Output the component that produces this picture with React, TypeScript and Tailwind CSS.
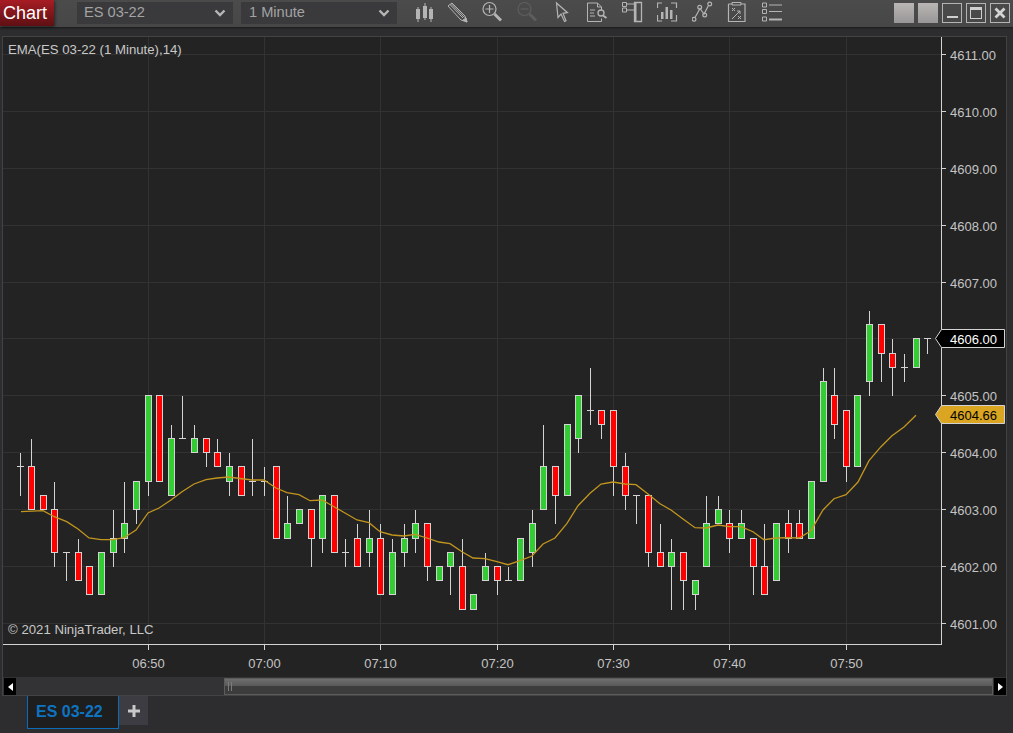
import React from "react";

type Bar = [number, number, number, number, "g" | "r" | "d"];

const bars: Bar[] = [
  [4, 3.75, 3.75, 3.25, "d"], [4.25, 3.75, 3, 3, "r"], [3.25, 3.25, 3, 3, "r"], [3.5, 3, 2.25, 2, "r"],
  [2.25, 2.25, 2.25, 1.75, "d"], [2.5, 2.25, 1.75, 1.75, "r"], [2, 2, 1.5, 1.5, "r"], [2.25, 2.25, 1.5, 1.5, "g"],
  [3, 2.5, 2.25, 2, "g"], [3.5, 2.75, 2.5, 2.25, "g"], [3.5, 3.5, 3, 2.75, "g"], [5, 5, 3.5, 3.25, "g"],
  [5, 5, 3.5, 3.5, "r"], [4.5, 4.25, 3.25, 3.25, "g"], [5, 4.25, 4.25, 4.25, "d"], [4.5, 4.25, 4, 4, "g"],
  [4.25, 4.25, 4, 3.75, "r"], [4.25, 4, 3.75, 3.75, "r"], [4, 3.75, 3.5, 3.25, "g"], [3.75, 3.75, 3.25, 3.25, "r"],
  [4.25, 3.5, 3.5, 3.25, "d"], [3.75, 3.5, 3.5, 3.25, "d"], [3.75, 3.75, 2.5, 2.5, "r"], [3.25, 2.75, 2.5, 2.5, "g"],
  [3, 3, 2.75, 2.75, "g"], [3, 3, 2.5, 2, "r"], [3.25, 3.25, 2.5, 2.25, "g"], [3.25, 3.25, 2.25, 2.25, "r"],
  [2.5, 2.25, 2.25, 2, "d"], [2.75, 2.5, 2, 2, "r"], [3, 2.5, 2.25, 2, "g"], [2.75, 2.5, 1.5, 1.5, "r"],
  [2.5, 2.25, 1.5, 1.5, "g"], [2.75, 2.5, 2.25, 2, "g"], [3, 2.75, 2.5, 2.25, "g"], [2.75, 2.75, 2, 1.75, "r"],
  [2, 2, 1.75, 1.75, "g"], [2.25, 2.25, 2, 1.5, "g"], [2.5, 2, 1.25, 1.25, "r"], [1.5, 1.5, 1.25, 1.25, "g"],
  [2.25, 2, 1.75, 1.75, "g"], [2, 2, 1.75, 1.5, "r"], [2, 1.75, 1.75, 1.75, "d"], [2.5, 2.5, 1.75, 1.75, "g"],
  [3, 2.75, 2.25, 2, "g"], [4.5, 3.75, 3, 3, "g"], [3.75, 3.75, 3.25, 2.75, "r"], [4.5, 4.5, 3.25, 3.25, "g"],
  [5, 5, 4.25, 4, "g"], [5.5, 4.75, 4.75, 4.5, "d"], [4.75, 4.75, 4.5, 4.25, "r"], [4.75, 4.75, 3.75, 3.25, "r"],
  [4, 3.75, 3.25, 3, "r"], [3.25, 3.25, 3.25, 2.75, "d"], [3.25, 3.25, 2.25, 2, "r"], [2.75, 2.25, 2, 2, "r"],
  [2.5, 2.25, 2, 1.25, "g"], [2.25, 2.25, 1.75, 1.25, "r"], [1.75, 1.75, 1.5, 1.25, "g"], [3.25, 2.75, 2, 2, "g"],
  [3.25, 3, 2.75, 2.75, "g"], [3, 2.75, 2.5, 2.25, "r"], [3, 2.75, 2.5, 2.5, "g"], [2.5, 2.5, 2, 1.5, "r"],
  [2.75, 2, 1.5, 1.5, "r"], [2.75, 2.75, 1.75, 1.75, "g"], [3, 2.75, 2.5, 2.25, "r"], [3, 2.75, 2.5, 2.5, "r"],
  [3.5, 3.5, 2.5, 2.5, "g"], [5.5, 5.25, 3.5, 3.5, "g"], [5.5, 5, 4.5, 4.25, "r"], [4.75, 4.75, 3.75, 3.5, "r"],
  [5, 5, 3.75, 3.75, "g"], [6.5, 6.25, 5.25, 5, "g"], [6.25, 6.25, 5.75, 5.25, "r"], [6, 5.75, 5.5, 5, "r"],
  [5.75, 5.5, 5.5, 5.25, "d"], [6, 6, 5.5, 5.5, "g"], [6, 6, 6, 5.75, "d"],
];

const ema =
  "21,511.7 43,510.7 54.3,516.7 66.7,521.7 78,529 89,538 101,539.7 113,539.7 124,537.7 136,530 148,513 159,508 171,500 182,491.7 194,484 206,479.7 217,478 229,477 240,478.5 252,480 264,480 276,488 287,492.7 299,494.7 310,500.7 322,500 334,506.7 345,513 357,520 369,522.7 380,531.7 392,535 404,536 415,534.3 427,538 439,542 450,543.7 462,551.7 473,558 485,558.7 497,561.7 508,564.7 520,560.7 532,556 543,544 555,538 567,523.3 578,505.7 590,493.3 601,484 613,482 625,484 636,484.7 648,494 660,503.7 671,510 683,519 695,527.7 706,528 718,525 729,526.7 741,526.7 753,531.7 764,539.7 776,538 788,537.7 799,538 811,530.7 823,510 834,498.7 846,494.7 858,482 869,460.7 881,446.7 892,435.7 904,427 916,415.3";

const barX = (i: number) => Math.floor(20.08 + 11.637 * i);
const priceY = (p: number) => Math.floor(395.8 + (5 - p) * 56.9);
const gridX = [148, 264, 380, 497, 613, 729, 846];
const times = ["06:50", "07:00", "07:10", "07:20", "07:30", "07:40", "07:50"];
const prices = [1, 2, 3, 4, 5, 6, 7, 8, 9, 10, 11];

const ic = "#b4b4b4";

const toolIcons: React.ReactNode[] = [
  <g key="candles" fill={ic}>
    <path d="M5.5 7h1v15h-1zM12.5 3h1v17h-1zM18.5 7h1v15h-1z" />
    <rect x="4" y="9" width="4" height="10" />
    <rect x="11" y="6" width="4" height="12" />
    <rect x="17" y="9" width="4" height="10" />
  </g>,
  <g key="pencil" fill="none" stroke={ic}>
    <path d="M1 6 5 3 18 16 20 22 14 20Z" strokeWidth="1" />
    <path d="M3 4.5 16 18M4.5 4 17.500 17.500" strokeWidth="1" />
    <path d="M16 20 20 22 19 18Z" fill={ic} />
  </g>,
  <g key="zoomin" fill="none" stroke={ic}>
    <circle cx="7.500" cy="9" r="6.500" strokeWidth="1.200" />
    <path d="M3.500 9h8M7.500 5v8" strokeWidth="1.200" />
    <path d="M12.500 14 19 20.500" strokeWidth="3" />
  </g>,
  <g key="zoomout" fill="none" stroke="#5e5e5e">
    <circle cx="7.500" cy="9" r="6.500" strokeWidth="1.200" />
    <path d="M3.500 9h8" strokeWidth="1.200" />
    <path d="M12.500 14 19 20.500" strokeWidth="3" />
  </g>,
  <g key="cursor" fill="none" stroke={ic} strokeWidth="1.200">
    <path d="M4.500 3 6 17.500 9 14 12.500 21.500 14 20.700 11 13.300 15.500 12.700Z" />
  </g>,
  <g key="docsearch" fill="none" stroke={ic} strokeWidth="1">
    <path d="M.5 3h10l4 4v3M.5 3v18.500h14v-3" />
    <path d="M10.500 3v4h4M3 10h5M3 13h4M3 16h5" />
    <circle cx="14" cy="13" r="3" strokeWidth="1.300" />
    <path d="M16 15.500 19.500 18" strokeWidth="2" />
  </g>,
  <g key="panels" fill="none" stroke={ic} strokeWidth="1">
    <path d="M.5 2.500h4v4h-4zM.5 8h4v4h-4zM4.500 4h8M4.500 10h8" />
    <path d="M12.500 2.500h7v19h-7z" strokeWidth="1.300" />
    <path d="M13 3h1v18h-1z" fill={ic} />
  </g>,
  <g key="bars" fill="none" stroke={ic} strokeWidth="1.200">
    <path d="M.5 8V3H5M14 3h5.500v5M.5 15v6H5M14 21h5.500v-6" />
    <path d="M4 12h2.500v7H4zM8.500 7H11v12H8.500zM13 10h2.500v9H13z" fill={ic} stroke="none" />
  </g>,
  <g key="line" fill="none" stroke={ic} strokeWidth="1.200">
    <path d="M3 17.500 8 8.500 12 14 16.500 5.500" />
    <circle cx="2" cy="19.300" r="1.900" />
    <circle cx="7.700" cy="7.300" r="1.900" />
    <circle cx="12.700" cy="15" r="1.900" />
    <circle cx="17.700" cy="4" r="1.900" />
  </g>,
  <g key="strategy" fill="none" stroke={ic} strokeWidth="1">
    <path d="M1.500 4h4M13.500 4h4.500v17.500H1.500V4" strokeWidth="1.200" />
    <path d="M5 2.500h9v2.500H5z" />
    <path d="M5 8l3 3M8 8l-3 3M11 16l3 3M14 16l-3 3M5 19l8-8M10 11h3v3" />
  </g>,
  <g key="list" fill="none" stroke={ic} strokeWidth="1">
    <path d="M.5 3h4v4h-4zM.5 9.500h4v4h-4zM.5 17h4v4h-4z" />
    <path d="M7 5h13M7 11.500h13" />
    <path d="M7 19.500h13" strokeWidth="2" />
  </g>,
];

function Chevron() {
  return (
    <svg width="12" height="8" viewBox="0 0 12 8" className="mb-[1px] block">
      <path d="M1.500 1.500 6 6l4.500-4.500" fill="none" stroke="#b6b6b6" strokeWidth="2.400" />
    </svg>
  );
}

function Dropdown({ label, pad }: { label: string; pad: string }) {
  return (
    <div className={`flex h-[22px] w-[156px] items-center justify-between bg-[#3a3a3d] pr-[7px] text-[14.6px] text-[#a3a3a3] ${pad}`}>
      <span>{label}</span>
      <Chevron />
    </div>
  );
}

function ChartSvg() {
  return (
    <svg width="1003" height="640" viewBox="3 37 1003 640" className="block">
      <g shapeRendering="crispEdges" stroke="#323232">
        {prices.map((p) => (
          <line key={p} x1="3" x2="941" y1={priceY(p) + 0.5} y2={priceY(p) + 0.5} />
        ))}
        {gridX.map((x) => (
          <line key={x} x1={x + 0.5} x2={x + 0.5} y1="37" y2="644" />
        ))}
      </g>
      <g shapeRendering="crispEdges">
        {bars.map(([hi, top, bot, lo, kind], i) => {
          const x = barX(i);
          const c = x + 0.5;
          const yh = priceY(hi) + 0.5;
          const yl = priceY(lo) + 0.5;
          const yt = priceY(top) + 0.5;
          const yb = priceY(bot) + 0.5;
          return (
            <g key={i}>
              <line x1={c} x2={c} y1={yh} y2={yl} stroke="#d3d3d3" />
              {kind === "d" ? (
                <line x1={x - 3} x2={x + 4} y1={yt} y2={yt} stroke="#d3d3d3" />
              ) : (
                <rect
                  x={x - 2.5}
                  y={yt}
                  width="6"
                  height={yb - yt}
                  fill={kind === "g" ? "#32cd32" : "#ff0000"}
                  stroke="#d3d3d3"
                />
              )}
            </g>
          );
        })}
      </g>
      <polyline points={ema} fill="none" stroke="#c2951f" strokeWidth="1.300" />
      <g shapeRendering="crispEdges" stroke="#d3d3d3">
        <line x1="941.500" x2="941.500" y1="37" y2="645" />
        <line x1="3" x2="942" y1="644.500" y2="644.500" />
        {prices.map((p) => {
          const y = priceY(p) + 0.5;
          return <line key={p} x1="942" x2="946" y1={y} y2={y} />;
        })}
        {gridX.map((x) => (
          <line key={x} x1={x + 0.5} x2={x + 0.5} y1="645" y2="650" />
        ))}
      </g>
      <g className="fill-[#c4c4c4] text-[13px]">
        {prices.map((p) => (
          <text key={p} x="950" y={priceY(p) + 6}>
            {(4600 + p).toFixed(2)}
          </text>
        ))}
        {times.map((t, i) => (
          <text key={t} x={gridX[i] + 0.5} y="668" textAnchor="middle">
            {t}
          </text>
        ))}
      </g>
      <path d="M1004.500 329.500H941.500L935.500 338.500L941.500 347.500H1004.500Z" fill="#000" stroke="#d3d3d3" />
      <text x="950" y="344" className="fill-white text-[13px]">4606.00</text>
      <path d="M1004.500 405.500H941.500L935.500 414.500L941.500 423.500H1004.500Z" fill="#daa520" stroke="#d3d3d3" />
      <text x="950" y="420" className="fill-black text-[13px]">4604.66</text>
    </svg>
  );
}

export default function App() {
  return (
    <div className="flex h-[733px] w-[1013px] flex-col overflow-hidden bg-[#2d2d2f] font-['Liberation_Sans',Arial,sans-serif]">
      <div className="flex h-[27px] shrink-0 items-start bg-gradient-to-b from-[#4b4b4b] to-[#474747] shadow-[0_1px_2px_rgba(0,0,0,0.4)]">
        <div className="flex h-[26px] w-[54px] items-center bg-gradient-to-b from-[#a81c24] to-[#5e1013] pl-[3px] text-[18px] text-white shadow-[1px_1px_3px_rgba(0,0,0,0.5)]">
          Chart
        </div>
        <div className="ml-[23px] mt-[2px]">
          <Dropdown label="ES 03-22" pad="pl-[7px]" />
        </div>
        <div className="ml-[8px] mt-[2px]">
          <Dropdown label="1 Minute" pad="pl-[8px]" />
        </div>
        <div className="ml-[15px] flex">
          {toolIcons.map((icon, i) => (
            <svg key={i} width="35" height="27" viewBox="0 0 35 27" className="block">
              {icon}
            </svg>
          ))}
        </div>
        <div className="ml-auto mr-[3px] mt-[3px] flex gap-[4px]">
          <div className="h-[20px] w-[20px] bg-gradient-to-b from-[#bab6b6] to-[#989696]" />
          <div className="h-[20px] w-[20px] bg-gradient-to-b from-[#bab6b6] to-[#989696]" />
          <div className="flex h-[20px] w-[20px] items-end justify-center border border-[#b4b4b4] pb-[4px]">
            <div className="h-[2px] w-[11px] bg-[#cfcfcf]" />
          </div>
          <div className="flex h-[20px] w-[20px] items-center justify-center border border-[#b4b4b4]">
            <div className="h-[12px] w-[12px] border border-t-[3px] border-[#cfcfcf]" />
          </div>
          <div className="flex h-[20px] w-[20px] items-center justify-center border border-[#b4b4b4]">
            <svg width="12" height="12" viewBox="0 0 12 12" className="block">
              <path d="M1.500 1.500 10.500 10.500M10.500 1.500 1.500 10.500" stroke="#d4d4d4" strokeWidth="2.800" />
            </svg>
          </div>
        </div>
      </div>
      <div className="h-[9px] shrink-0" />
      <div className="ml-[2px] mr-[6px] flex h-[660px] shrink-0 flex-col border-x border-b border-t border-[#434345] bg-[#232323]">
        <div className="relative h-[640px] shrink-0">
          <ChartSvg />
          <span className="absolute left-[5px] top-[5px] text-[13.2px] leading-[16px] text-[#c8c8c8]">
            EMA(ES 03-22 (1 Minute),14)
          </span>
          <span className="absolute left-[5px] top-[585px] text-[13.2px] leading-[16px] text-[#c8c8c8]">
            © 2021 NinjaTrader, LLC
          </span>
        </div>
        <div className="flex h-[18px] shrink-0 items-stretch bg-[#333335] pl-[1px] pt-[1px]">
          <div className="flex w-[12px] items-center justify-center bg-black">
            <div className="h-0 w-0 border-y-[4px] border-r-[5px] border-y-transparent border-r-white" />
          </div>
          <div className="ml-[208px] flex w-[769px] items-center border border-[#5c5c5c] bg-[linear-gradient(180deg,#6e6e6e_0%,#585858_48%,#3c3c3c_50%,#3c3c3c_100%)] pl-[3px]">
            <div className="h-[9px] w-[4px] border-x border-[#7c7c7c]" />
          </div>
          <div className="ml-[1px] flex w-[12px] items-center justify-center bg-black">
            <div className="h-0 w-0 border-y-[4px] border-l-[5px] border-y-transparent border-l-white" />
          </div>
        </div>
      </div>
      <div className="flex items-start pl-[27px]">
        <div className="flex h-[33px] w-[92px] items-center border-x border-b border-[#0d6cb8] bg-[#1e1e1e] pl-[8px] text-[16px] font-bold text-[#0e74c2]">
          ES 03-22
        </div>
        <div className="flex h-[29px] w-[29px] items-center justify-center bg-[#3c3c42]">
          <svg width="14" height="14" viewBox="0 0 14 14" className="block">
            <path d="M7 1v12M1 7h12" stroke="#c8c8c8" strokeWidth="3" />
          </svg>
        </div>
      </div>
    </div>
  );
}
